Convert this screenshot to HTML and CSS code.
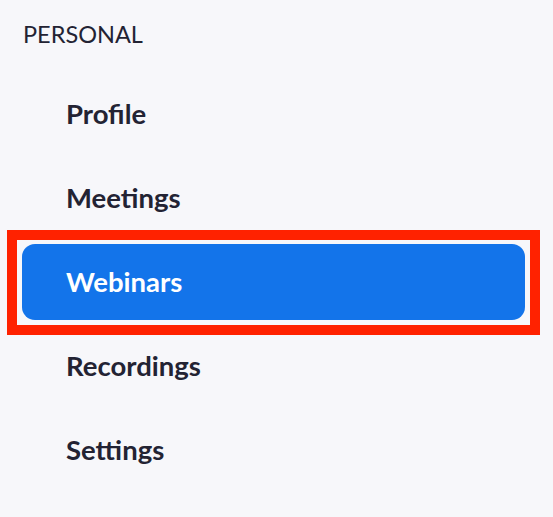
FILE: index.html
```html
<!DOCTYPE html>
<html>
<head>
<meta charset="utf-8">
<link rel="stylesheet" href="styles.css">
</head>
<body>
<nav class="sidebar">
  <div class="section-title">PERSONAL</div>
  <ul class="menu">
    <li class="menu-item">Profile</li>
    <li class="menu-item">Meetings</li>
    <li class="menu-item active">Webinars</li>
    <li class="menu-item">Recordings</li>
    <li class="menu-item">Settings</li>
  </ul>
</nav>
</body>
</html>
```
FILE: styles.css
```css
html, body {
  margin: 0;
  padding: 0;
  background: #f7f7fa;
}
body {
  font-family: "Lato", "Liberation Sans", sans-serif;
  color: #232333;
  width: 553px;
  height: 517px;
  overflow: hidden;
}
.sidebar {
  display: flex;
  flex-direction: column;
  padding-top: 19px;
}
.section-title {
  padding-left: 23px;
  font-size: 23.5px;
  line-height: 30px;
  font-weight: 400;
}
.menu {
  list-style: none;
  margin: 27px 0 0 22px;
  padding: 0;
  display: flex;
  flex-direction: column;
  gap: 8px;
}
.menu-item {
  position: relative;
  width: 503px;
  height: 76px;
  box-sizing: border-box;
  padding-left: 44px;
  padding-bottom: 2px;
  display: flex;
  align-items: center;
  font-size: 27.5px;
  font-weight: 700;
  border-radius: 13px;
}
.menu-item.active {
  background: #1374ea;
  color: #ffffff;
}
.menu-item.active::after {
  content: "";
  position: absolute;
  top: -14px;
  left: -15px;
  right: -15px;
  bottom: -15px;
  border: 10px solid #ff2200;
  pointer-events: none;
}
```
